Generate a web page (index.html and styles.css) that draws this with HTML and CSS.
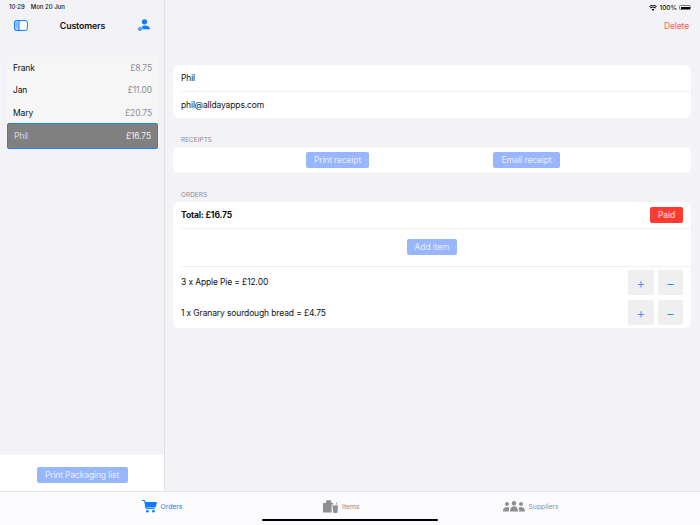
FILE: index.html
```html
<!DOCTYPE html>
<html lang="en">
<head>
  <meta charset="UTF-8">
  <meta name="viewport" content="width=device-width, initial-scale=1.0">
  <title>Customers</title>
  <link rel="stylesheet" href="styles.css">
</head>
<body>
  <div class="app">
    <div class="columns">
      <aside class="sidebar">
        <div class="status-left"><span>10:29</span><span>Mon 20 Jun</span></div>
        <div class="side-nav">
          <svg class="nav-icon" width="14" height="11" viewBox="0 0 14 11">
            <rect x="0.6" y="0.6" width="12.8" height="9.8" rx="2" fill="#fff" stroke="#0a7aff" stroke-width="1"/>
            <path d="M0.6 2.6a2 2 0 0 1 2-2H5V10.4H2.6a2 2 0 0 1-2-2Z" fill="#b5d6fc" stroke="#0a7aff" stroke-width="1"/>
            <path d="M2 3H3.6M2 5H3.6M2 7H3.6" stroke="#0a7aff" stroke-width="0.7"/>
          </svg>
          <h1>Customers</h1>
          <svg class="nav-icon" width="14" height="13" viewBox="0 0 14 13">
            <circle cx="7.5" cy="2.8" r="2.6" fill="#0a7aff"/>
            <path d="M4 10.2C4 7.4 6 6.4 8 6.4S13 7.4 13 10.2Z" fill="#0a7aff"/>
            <circle cx="3" cy="10" r="2.3" fill="#0a7aff" stroke="#f2f2f7" stroke-width="0.8"/>
            <circle cx="3" cy="10" r="0.7" fill="#f2f2f7"/>
          </svg>
        </div>
        <ul class="customers">
          <li><span>Frank</span><span class="amount">£8.75</span></li>
          <li><span>Jan</span><span class="amount">£11.00</span></li>
          <li><span>Mary</span><span class="amount">£20.75</span></li>
          <li class="selected"><span>Phil</span><span class="amount">£16.75</span></li>
        </ul>
        <div class="side-footer">
          <button class="btn">Print Packaging list</button>
        </div>
      </aside>
      <main class="detail">
        <div class="status-right">
          <svg width="8" height="6" viewBox="0 0 16 12">
            <path d="M8 12L5.4 9a3.6 3.6 0 0 1 5.2 0ZM3.6 7.2L2 5.4a8.4 8.4 0 0 1 12 0L12.4 7.2a6 6 0 0 0-8.8 0ZM1 4.2L0 3a11.4 11.4 0 0 1 16 0L15 4.2a10.4 10.4 0 0 0-14 0Z" fill="#000"/>
          </svg>
          <span>100%</span>
          <span class="battery"><span class="battery-fill"></span></span>
        </div>
        <div class="detail-nav"><span class="delete">Delete</span></div>
        <section class="card first">
          <div class="row field">Phil</div>
          <div class="row field">phil@alldayapps.com</div>
        </section>
        <h2>RECEIPTS</h2>
        <section class="card">
          <div class="receipts">
            <div class="cell"><button class="btn">Print receipt</button></div>
            <div class="cell"><button class="btn">Email receipt</button></div>
          </div>
        </section>
        <h2>ORDERS</h2>
        <section class="card">
          <div class="row total"><strong>Total: £16.75</strong><button class="paid">Paid</button></div>
          <div class="row add"><button class="btn">Add item</button></div>
          <div class="row item">
            <span>3 x Apple Pie = £12.00</span>
            <div class="steppers"><button class="step">+</button><button class="step">−</button></div>
          </div>
          <div class="row item">
            <span>1 x Granary sourdough bread = £4.75</span>
            <div class="steppers"><button class="step">+</button><button class="step">−</button></div>
          </div>
        </section>
      </main>
    </div>
    <nav class="tabbar">
      <div class="tab active">
        <svg width="15" height="13" viewBox="0 0 15 13">
          <path d="M0 0.5H2.6L4 8.6H12.6" fill="none" stroke="#0a7aff" stroke-width="1"/>
          <path d="M3 2H15L13.6 7.6H4Z" fill="#0a7aff"/>
          <circle cx="5.4" cy="11.2" r="1.3" fill="#0a7aff"/>
          <circle cx="11.4" cy="11.2" r="1.3" fill="#0a7aff"/>
        </svg>
        <span>Orders</span>
      </div>
      <div class="tab">
        <svg width="16" height="13" viewBox="0 0 16 13">
          <path d="M3 3V1.6C3 .8 3.6.3 4.4.3H7C7.8.3 8.4.8 8.4 1.6V3H9.6C10.2 3 10.6 3.4 10.6 4V4.6H8.6V12.6H1C.4 12.6 0 12.2 0 11.6V4C0 3.4.4 3 1 3Z" fill="#8e8e93"/>
          <path d="M9.4 5.4H15.2L14.4 12.2C14.3 12.7 14 13 13.5 13H11.1C10.6 13 10.3 12.7 10.2 12.2Z" fill="#8e8e93"/>
          <path d="M13 5L14 2.4" stroke="#8e8e93" stroke-width="0.8"/>
        </svg>
        <span>Items</span>
      </div>
      <div class="tab">
        <svg width="22" height="11" viewBox="0 0 22 11">
          <circle cx="4" cy="3" r="2" fill="#8e8e93"/>
          <circle cx="11" cy="2.2" r="2.2" fill="#8e8e93"/>
          <circle cx="18" cy="3" r="2" fill="#8e8e93"/>
          <path d="M0 10.6C0 7.4 1.6 6 4 6C5 6 5.8 6.3 6.4 6.8C6 7.8 5.8 9 5.8 10.6Z" fill="#8e8e93"/>
          <path d="M7 10.6C7 7 8.6 5.2 11 5.2S15 7 15 10.6Z" fill="#8e8e93"/>
          <path d="M22 10.6C22 7.4 20.4 6 18 6C17 6 16.2 6.3 15.6 6.8C16 7.8 16.2 9 16.2 10.6Z" fill="#8e8e93"/>
        </svg>
        <span>Suppliers</span>
      </div>
      <div class="home-indicator"></div>
    </nav>
  </div>
</body>
</html>
```

FILE: styles.css
```css
* {
  box-sizing: border-box;
}

body {
  margin: 0;
  font-family: Inter, "Liberation Sans", sans-serif;
  font-size: 8.5px;
  letter-spacing: -0.13px;
  color: #111;
  background-color: #f2f2f7;
}

button {
  font-family: inherit;
  letter-spacing: inherit;
  border: none;
  padding: 0;
}

.app {
  width: 700px;
  height: 525px;
  display: flex;
  flex-direction: column;
  overflow: hidden;
}

.columns {
  flex: 1;
  display: flex;
  min-height: 0;
}

/* sidebar */
.sidebar {
  width: 165px;
  display: flex;
  flex-direction: column;
  border-right: 1px solid #e2e2e6;
}

.status-left {
  height: 13px;
  padding: 2px 0 0 9px;
  display: flex;
  gap: 6px;
  font-size: 6px;
  line-height: 9px;
  font-weight: 500;
  letter-spacing: 0;
}

.side-nav {
  height: 25px;
  padding: 0 13px 0 14px;
  display: flex;
  align-items: center;
  justify-content: space-between;
}

.side-nav h1 {
  margin: 0;
  font-size: 8.8px;
  font-weight: 600;
}

.customers {
  list-style-type: none;
  margin: 18.5px 0 0;
  padding: 0 6px 0 7px;
}

.customers li {
  height: 22.5px;
  padding: 0 6px;
  display: flex;
  align-items: center;
  justify-content: space-between;
  background-color: #f6f6f6;
}

.customers .amount {
  color: #8e8e93;
}

.customers li.selected {
  height: 26px;
  margin-top: -1px;
  background-color: #808080;
  border: 1.5px solid #1a84ff;
  border-radius: 2px;
  color: #d8d8d8;
}

.customers li.selected .amount {
  color: #eee;
}

.side-footer {
  margin-top: auto;
  height: 36px;
  padding-top: 4px;
  background-color: #fff;
  display: flex;
  align-items: center;
  justify-content: center;
}

/* buttons */
.btn {
  height: 16px;
  padding: 0 8px;
  font-size: 8.5px;
  color: #e6edff;
  background-color: #98b6fb;
  border-radius: 2px;
}

.side-footer .btn {
  width: 91px;
  padding: 0;
}

.paid {
  width: 33px;
  height: 16px;
  font-size: 8.5px;
  color: #ffe4e2;
  background-color: #ff3b30;
  border-radius: 2px;
}

.step {
  width: 25.5px;
  height: 25px;
  font-size: 14px;
  font-weight: 300;
  color: #2a8cff;
  background-color: #efeff0;
  border-radius: 2px;
}

/* detail */
.detail {
  flex: 1;
  padding: 0 9px 0 8px;
}

.status-right {
  height: 13px;
  padding: 2px 0 0;
  display: flex;
  align-items: center;
  justify-content: flex-end;
  gap: 2px;
  font-size: 6.5px;
  font-weight: 500;
  letter-spacing: 0;
}

.battery {
  width: 12px;
  height: 5px;
  padding: 0.5px;
  border: 0.5px solid #777;
  border-radius: 1.5px;
}

.battery-fill {
  display: block;
  height: 100%;
  background-color: #000;
}

.detail-nav {
  height: 25px;
  padding-right: 2px;
  display: flex;
  align-items: center;
  justify-content: flex-end;
}

.delete {
  color: #ff5a52;
}

.card {
  background-color: #fff;
  border-radius: 6px;
  padding-left: 8px;
}

.card.first {
  margin-top: 27px;
}

h2 {
  margin: 0;
  height: 29px;
  padding: 18px 0 0 8px;
  font-size: 6.5px;
  line-height: 9px;
  font-weight: 400;
  letter-spacing: 0;
  color: #8e8e93;
}

.row {
  display: flex;
  align-items: center;
  justify-content: space-between;
  padding-right: 8px;
  border-top: 1px solid #f0f0f3;
}

.row:first-child {
  border-top: none;
}

.field {
  height: 26px;
}

.field + .field {
  height: 27px;
}

.receipts {
  height: 26px;
  margin-left: -8px;
  padding: 0 70px;
  display: flex;
}

.cell {
  flex: 1;
  display: flex;
  align-items: center;
  justify-content: center;
}

.total {
  height: 25.5px;
}

.add {
  height: 38.5px;
  justify-content: center;
}

.item {
  height: 31px;
  border-top: none;
}

.add + .item {
  border-top: 1px solid #f0f0f3;
}

.steppers {
  display: flex;
  gap: 4px;
}

/* tab bar */
.tabbar {
  position: relative;
  height: 34px;
  flex: none;
  display: flex;
  padding-left: 142px;
  background-color: #fbfbfd;
  border-top: 1px solid #e2e2e6;
}

.tab {
  width: 180.5px;
  display: flex;
  align-items: center;
  gap: 3.5px;
  padding-bottom: 5px;
  font-size: 6.8px;
  letter-spacing: 0;
  color: #8e8e93;
}

.tab.active {
  color: #0a7aff;
}

.home-indicator {
  position: absolute;
  left: 262px;
  bottom: 4px;
  width: 176px;
  height: 2.5px;
  border-radius: 2px;
  background-color: #000;
}
```
